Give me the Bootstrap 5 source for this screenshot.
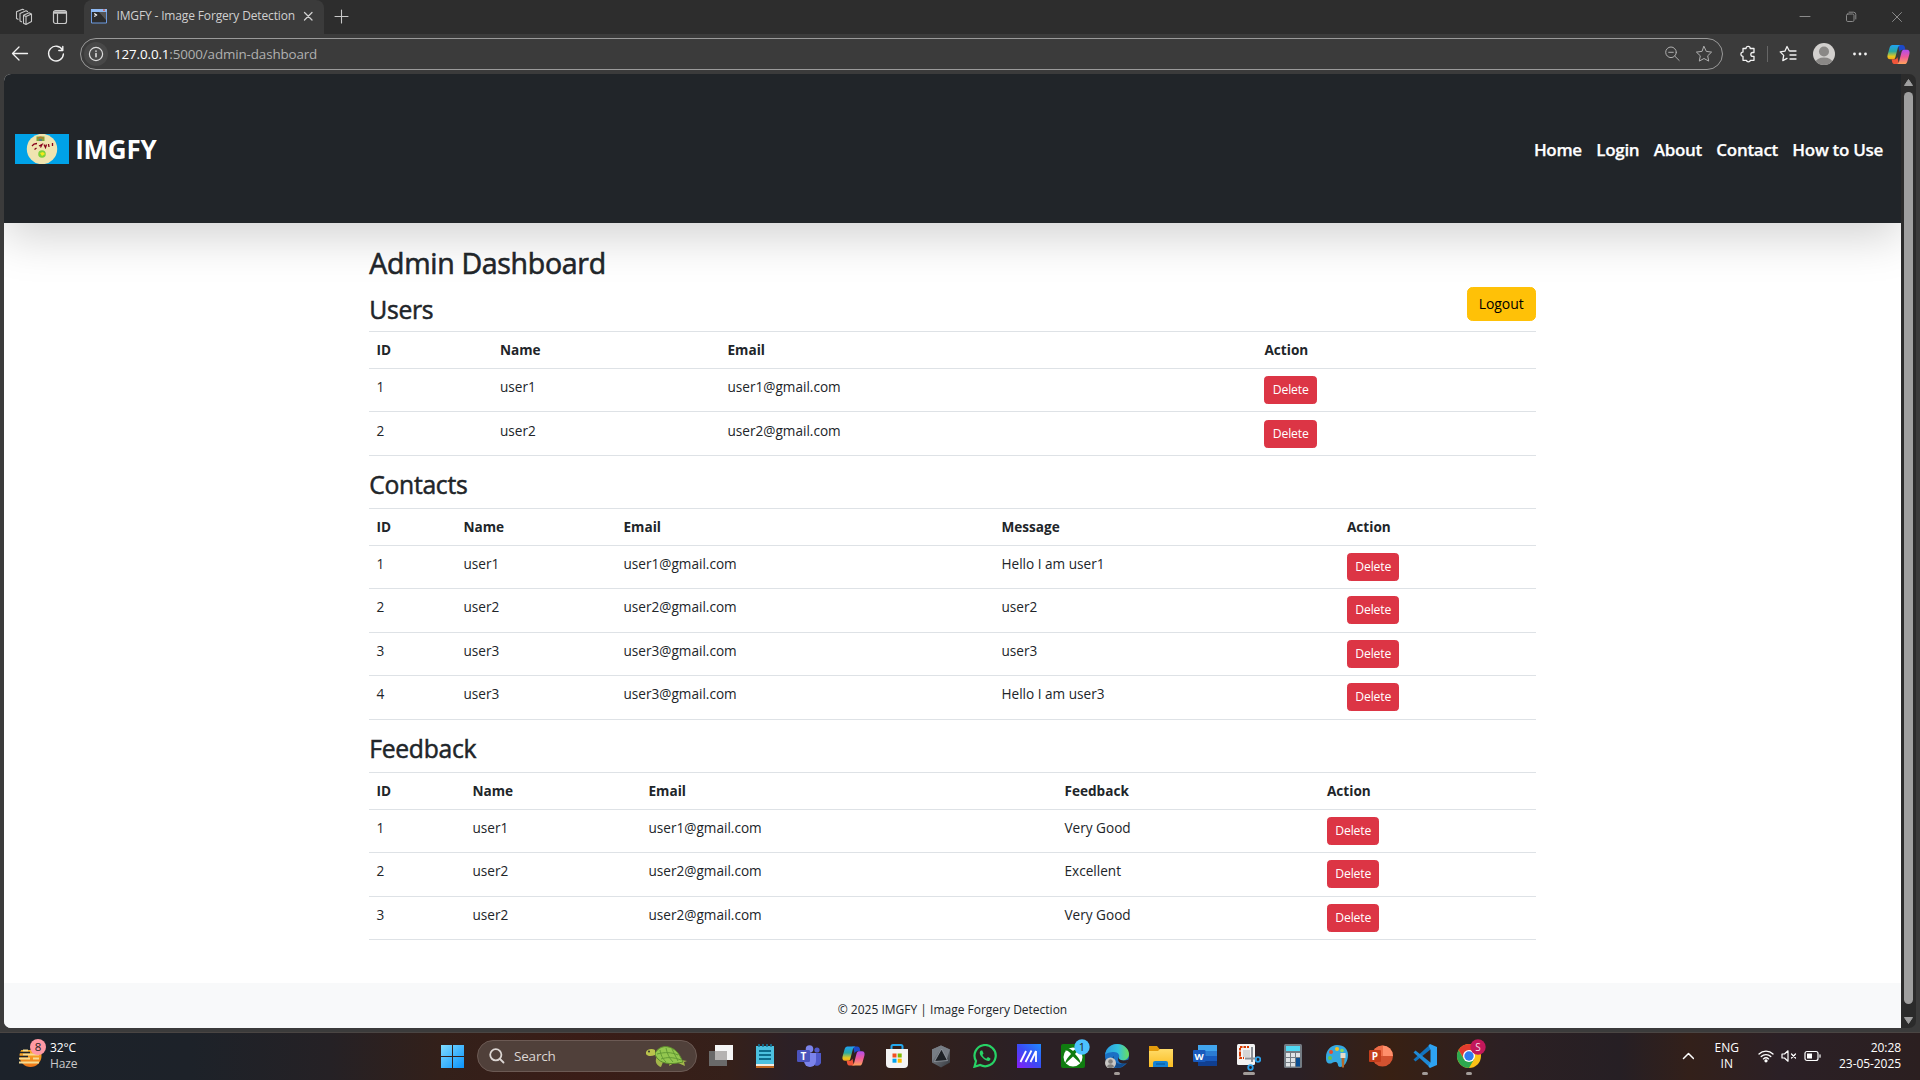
<!DOCTYPE html>
<html lang="en">
<head>
<meta charset="utf-8">
<meta name="viewport" content="width=device-width, initial-scale=1">
<title>IMGFY - Image Forgery Detection</title>
<link href="https://cdn.jsdelivr.net/npm/bootstrap@5.3.0/dist/css/bootstrap.min.css" rel="stylesheet">
<style>
html{font-size:14.4px}
body{font-family:"Open Sans","Noto Sans",sans-serif;width:1920px;height:1080px;overflow:hidden;background:#3b3b3b}
svg{display:block;flex:none}
.ln{fill:none;stroke:currentColor;stroke-linecap:round;stroke-linejoin:round}
/* browser chrome */
.tabstrip{height:34px;background:#2d2d2d;color:#c8c8c8}
.tabstrip .side{width:84px;padding-left:15px;gap:19px;border-bottom-right-radius:8px}
.tabitem{width:240px;height:34px;background:#3b3b3b;border-radius:8px 8px 0 0;padding:0 10px 2px 7px;font-size:12px;letter-spacing:-.15px;color:#d0d0d0}
.tabtitle{margin-left:9.5px}
.newtab{margin-left:9px}
.wincontrols{gap:30px;padding-right:15px;color:#8a8a8a}
.toolbar{height:40px;background:#3b3b3b;color:#f2f2f2}
.addr{width:1643px;height:32px;border:1px solid #9a9a9a;border-radius:16px;padding:0 9px 0 3px;color:#b0b0b0;font-size:13.4px}
.addr .info{width:24px;height:24px;border-radius:50%;background:#484848;color:#dcdcdc}
.addr b{color:#fff;font-weight:400}
.url{margin-left:6px;letter-spacing:-.13px}
.tools{gap:12px;padding-left:16px}
.tools svg:nth-child(1){margin-right:-2px}
.tools svg:nth-child(3){margin-right:4px;margin-left:-1px}
.tools svg:nth-child(4){margin-right:5px}
.tools svg:nth-child(5){margin-right:7px}
.view{height:954px;margin:0 4px;border-radius:7px;overflow:hidden;background:#2b2b2b}
.site{width:1897px;background:#fff;overflow:hidden}
.topnav{height:149px;background:#212529;box-shadow:0 14.4px 43.2px rgba(0,0,0,.175);padding:0 18px 0 11px}
.brandname{font-size:26px;font-weight:700;color:#fff;line-height:30px;letter-spacing:-.25px;margin-left:-1px}
.links{gap:14.4px;font-size:17px;font-weight:600;letter-spacing:-.3px;padding-top:2px}
.links a{color:#fff;text-decoration:none;-webkit-text-stroke:.25px}
.main{max-width:1188px;height:760px;padding-top:23px;padding-left:10.8px;padding-right:10.8px}
.main h2{font-size:28.5px;line-height:35px;margin-bottom:6px;font-weight:500;letter-spacing:-.3px;-webkit-text-stroke:.6px}
.main h3{font-size:24.7px;line-height:30.24px;font-weight:500;letter-spacing:-.3px;margin-bottom:7.2px;-webkit-text-stroke:.5px}
.userhead{height:44px}
.userhead h3{padding-top:1px}
.btn-logout{width:69px;height:34px;padding:0 0 1px;font-size:14px;letter-spacing:-.1px}
.main .table{table-layout:fixed;font-size:13.6px;line-height:21.6px;--bs-table-bg:transparent;border-top:1px solid #dee2e6;margin-bottom:14.4px}
.table>:not(caption)>*>*{padding:7.2px}
.table td{height:43.5px}
.table .btn{width:52.5px;height:28px;padding:0;font-size:12.2px;line-height:26px;border-radius:3.6px;letter-spacing:-.15px;display:block}
.t-users th:nth-child(1){width:123.5px}.t-users th:nth-child(2){width:227.5px}.t-users th:nth-child(3){width:537px}
.t-contacts th:nth-child(1){width:87px}.t-contacts th:nth-child(2){width:160px}.t-contacts th:nth-child(3){width:378px}.t-contacts th:nth-child(4){width:345.5px}
.t-feedback th:nth-child(1){width:96px}.t-feedback th:nth-child(2){width:176px}.t-feedback th:nth-child(3){width:416px}.t-feedback th:nth-child(4){width:262.5px}
.foot{height:45px;background:#f8f9fa;font-size:12px;padding-top:9px}
.scroll{width:15px;padding:5px 0 4px}
.thumb{width:9px;height:912px;border-radius:5px;background:#9f9f9f;margin:6px 0 13px}
/* taskbar */
.taskbar{height:48px;margin-top:4px;border-top:1px solid #4a4543;padding-bottom:2px;color:#fff;font-size:12px;line-height:16px;background:linear-gradient(90deg,#1c222a 0,#1d2229 190px,#252125 330px,#33201a 440px,#3a1d17 580px,#35201a 730px,#2c2026 790px,#33201a 900px,#2b2025 1020px,#2b2025 1300px,#382013 1390px,#2c2023 1500px,#261f24 1620px,#33201a 1690px,#2b2026 1780px,#2b1f20 1920px)}
.weather{width:437px;padding-left:18px;gap:4px;letter-spacing:-.15px}
.weather svg{margin-top:-6px}
.haze{color:#c9c9c9}
.pill{width:220px;height:32px;border-radius:16px;margin-left:9px;background:#50403a;border:1px solid #6c5a54;padding:0 7px 0 11px;font-size:13.5px;color:#dcd6d3;letter-spacing:-.2px}
.pill span{margin-left:9px}
.apps{margin-left:2px}
.app{width:44px;height:47px;padding-top:12px}
.dot{width:6px;height:3px;border-radius:2px;background:#a39c99;margin-top:4px}
.dot.wide{width:12px}
.tray{padding-right:19px;letter-spacing:-.07px}
.lang{width:64px;padding-left:2px}
</style>
<script src="https://cdn.jsdelivr.net/npm/bootstrap@5.3.0/dist/js/bootstrap.bundle.min.js"></script>
</head>
<body>
<svg width="0" height="0" class="position-absolute">
  <defs>
    <linearGradient id="cpA" x1="0" y1="0" x2="0" y2="1"><stop offset="0" stop-color="#1fa2f5"/><stop offset=".45" stop-color="#2aa9a0"/><stop offset=".8" stop-color="#e8c81e"/><stop offset="1" stop-color="#f4a51c"/></linearGradient>
    <linearGradient id="cpB" x1="0" y1="0" x2="0" y2="1"><stop offset="0" stop-color="#b04df0"/><stop offset=".5" stop-color="#ee5a9a"/><stop offset="1" stop-color="#ffa45a"/></linearGradient>
    <linearGradient id="win" x1="0" y1="0" x2="1" y2="1"><stop offset="0" stop-color="#7fdcff"/><stop offset="1" stop-color="#0a93fb"/></linearGradient>
    <linearGradient id="sun" x1="0" y1="0" x2="0" y2="1"><stop offset="0" stop-color="#fbc02d"/><stop offset="1" stop-color="#ee7518"/></linearGradient>
    <linearGradient id="edg" x1="0" y1="0" x2="1" y2="0"><stop offset="0" stop-color="#2b9be0"/><stop offset=".55" stop-color="#33c2dd"/><stop offset="1" stop-color="#6bdd5b"/></linearGradient>
    <linearGradient id="myas" x1="0" y1="1" x2="1" y2="0"><stop offset="0" stop-color="#8a1cf5"/><stop offset=".5" stop-color="#3a4bf5"/><stop offset="1" stop-color="#1f8bff"/></linearGradient>
    <linearGradient id="fold" x1="0" y1="0" x2="0" y2="1"><stop offset="0" stop-color="#ffdc6a"/><stop offset="1" stop-color="#fbbd22"/></linearGradient>
    <linearGradient id="grey" x1="0" y1="0" x2="1" y2="1"><stop offset="0" stop-color="#8b9097"/><stop offset="1" stop-color="#34383e"/></linearGradient>
    <symbol id="copilot" viewBox="0 0 24 24">
      <path d="M16 2c1.400 0 2.200.8 2.600 2.200L19.200 7h-3c-1.700 0-2.400.8-3 2.500L12 4.200C11.600 2.700 11 2 10 2z" fill="#1c49c8"/>
      <path d="M5.600 2H14c-1.400.4-2.200 1.300-2.700 3L8.800 14.500C8.300 16.400 7.400 17 5.600 17H3.200C.8 17 0 15.200.6 12.600L2.700 5C3.300 3 4.200 2 5.600 2z" fill="url(#cpA)"/>
      <path d="M8 22c-1.400 0-2.200-.8-2.600-2.200L4.800 17h3c1.700 0 2.400-.8 3-2.500l1.200 5.300c.4 1.500 1 2.200 2 2.200z" fill="#f0553a"/>
      <path d="M18.400 22H10c1.400-.4 2.200-1.300 2.700-3l2.500-9.500C15.700 7.600 16.600 7 18.400 7h2.400c2.400 0 3.200 1.800 2.600 4.400L21.300 19c-.6 2-1.500 3-2.900 3z" fill="url(#cpB)"/>
    </symbol>
  </defs>
</svg>

<div class="tabstrip d-flex align-items-center">
  <div class="side d-flex align-items-center">
    <svg width="18" height="18" viewBox="0 0 18 18" class="ln" stroke-width="1.100"><path d="M8.500 7.300l5.500-2.600 2.500 1.300v7.500L11 16.500l-2.500-1.300zM6.500 13.800L5 13V5.500l6-2.700 1.500.8M3 11.300L1.500 10.500V3.800L7.500 1.200l1.300.6M8.500 7.300L11 8.600l5.500-2.600M11 8.600v7.900"/></svg>
    <svg width="16" height="16" viewBox="0 0 16 16" class="ln" stroke-width="1.200"><rect x="1.500" y="1.500" width="13" height="13" rx="2"/><path d="M2.500 3.500h11" stroke-width="2.600"/><path d="M5.500 5v9"/></svg>
  </div>
  <div class="tabitem d-flex align-items-center">
    <svg width="16" height="16" viewBox="0 0 16 16"><path d="M.5 1.500h15v13.500H.5z" fill="#2c2c2c" stroke="#6d9be0"/><path d="M8 4h7v8z" fill="#555"/><path d="M0 1h16v3H0z" fill="#8fb9f2"/><path d="M12 1.500h2v1.300h-2z" fill="#d94a3a"/><path d="M3.300 5.500L5.500 7 3.300 8.500" fill="none" stroke="#fff" stroke-width="1.200"/></svg>
    <span class="tabtitle text-nowrap flex-grow-1">IMGFY - Image Forgery Detection</span>
    <svg width="12" height="12" viewBox="0 0 12 12" class="ln" stroke-width="1.300"><path d="M2.500 2.500l7.500 7.500M10 2.500L2.500 10"/></svg>
  </div>
  <svg width="16" height="16" viewBox="0 0 16 16" class="ln newtab" stroke-width="1.100"><path d="M8.500 1v13M2 7.500h13"/></svg>
  <div class="wincontrols d-flex align-items-center ms-auto">
    <svg width="16" height="16" viewBox="0 0 16 16" class="ln"><path d="M3 7.500h10"/></svg>
    <svg width="16" height="16" viewBox="0 0 16 16" class="ln"><rect x="3.500" y="5" width="7.500" height="7.500" rx="1.300"/><path d="M6 3.200h4.500a2.300 2.300 0 0 1 2.300 2.300V10"/></svg>
    <svg width="16" height="16" viewBox="0 0 16 16" class="ln"><path d="M3.500 3.500l9 9M12.500 3.500l-9 9"/></svg>
  </div>
</div>

<div class="toolbar d-flex align-items-center">
  <svg width="40" height="20" viewBox="0 0 40 20" class="ln" stroke-width="1.300"><path d="M27.500 9.500h-15M19 3L12.500 9.500l6.500 6.500"/></svg>
  <svg width="40" height="20" viewBox="0 0 40 20" class="ln" stroke-width="1.400"><path d="M22.500 6A7.400 7.400 0 1 0 23.400 10M22.800 2.500v4h-4"/></svg>
  <div class="addr d-flex align-items-center">
    <span class="info d-flex align-items-center justify-content-center"><svg width="16" height="16" viewBox="0 0 16 16" class="ln" stroke-width="1.200"><circle cx="8" cy="8" r="6.600"/><path d="M8 7.500v3.300M8 5v.2" stroke-width="1.600"/></svg></span>
    <span class="url"><b>127.0.0.1</b>:5000/admin-dashboard</span>
    <svg width="16" height="16" viewBox="0 0 16 16" class="ln ms-auto me-3" stroke="#8d8d8d"><circle cx="6" cy="6.300" r="5.300"/><path d="M9.900 10.200l4.300 4.300M3.700 6.300h4.600"/></svg>
    <svg width="18" height="18" viewBox="0 0 18 18" class="ln" stroke="#999"><path d="M9 1.500l2.300 4.900 5.300.7-3.900 3.700 1 5.300L9 13.500l-4.700 2.600 1-5.300L1.400 7.100l5.300-.7z"/></svg>
  </div>
  <div class="tools d-flex align-items-center">
    <svg width="18" height="18" viewBox="0 0 18 18" class="ln" stroke-width="1.300"><path d="M4 3.500h3a2.100 2.100 0 0 1 4.200 0H15v4h-1.300a1.900 1.900 0 0 0 0 3.800H15v4h-3.500a2.200 2.200 0 0 1-4.200 0H4v-4a2.100 2.100 0 0 1 0-4.200z"/></svg>
    <svg width="1" height="16"><path d="M0 0h1v16H0z" fill="#666"/></svg>
    <svg width="18" height="18" viewBox="0 0 18 18" class="ln" stroke-width="1.300"><path d="M10.200 5.800L8 1.500 5.900 6.200l-4.700.7 3.500 3.500-.9 5.200L8 13.400M11 6h6M11 10h6M11 14h6"/></svg>
    <svg width="22" height="22" viewBox="0 0 22 22"><clipPath id="av"><circle cx="11" cy="11" r="11"/></clipPath><g clip-path="url(#av)"><path d="M0 0h22v22H0z" fill="#d2d0ce"/><circle cx="11" cy="8.500" r="5" fill="#8a8886"/><ellipse cx="11" cy="19.500" rx="8.500" ry="5" fill="#8a8886"/></g></svg>
    <svg width="16" height="16" viewBox="0 0 16 16" fill="#f2f2f2"><circle cx="2.500" cy="8" r="1.400"/><circle cx="8" cy="8" r="1.400"/><circle cx="13.500" cy="8" r="1.400"/></svg>
    <svg width="23" height="23"><use href="#copilot"/></svg>
  </div>
</div>

<div class="view d-flex">
  <div class="site d-flex flex-column">
    <nav class="topnav d-flex align-items-center justify-content-between flex-shrink-0">
      <div class="d-flex align-items-center gap-2">
        <svg width="54" height="30" viewBox="0 0 54 30"><path d="M0 0h54v30H0z" fill="#00a2e8"/><circle cx="27" cy="15" r="15.200" fill="#efe4b0"/><path d="M21.500 2.500h8v4.500h-8z" fill="#7aa83a"/><path d="M22.500 5c2-2.500 4-2.500 6 0" stroke="#e8502a" fill="none"/><path d="M24 6h3" stroke="#3f48cc"/><path d="M17 12l2-2 3-.5M19.500 15.500l2-1.500M24 12l3-1.500-1.500 3M29 10.500l1.500 3 1-3M33.500 10l.5 3M37.500 9v3" fill="none" stroke="#88001b" stroke-width="1.300"/><circle cx="27" cy="20" r="3.800" fill="#7ed13c"/><path d="M25 19l3-1 2 2-3 2z" fill="#f6ea1c"/></svg>
        <span class="brandname">IMGFY</span>
      </div>
      <div class="links d-flex">
        <a href="#">Home</a><a href="#">Login</a><a href="#">About</a><a href="#">Contact</a><a href="#">How to Use</a>
      </div>
    </nav>
    <main class="container main">
      <h2>Admin Dashboard</h2>
      <div class="userhead d-flex justify-content-between align-items-start">
        <h3 class="mt-2">Users</h3>
        <button class="btn btn-warning btn-logout">Logout</button>
      </div>
      <table class="table t-users">
        <thead><tr><th>ID</th><th>Name</th><th>Email</th><th>Action</th></tr></thead>
        <tbody>
          <tr><td>1</td><td>user1</td><td>user1@gmail.com</td><td><button class="btn btn-danger">Delete</button></td></tr>
          <tr><td>2</td><td>user2</td><td>user2@gmail.com</td><td><button class="btn btn-danger">Delete</button></td></tr>
        </tbody>
      </table>
      <h3>Contacts</h3>
      <table class="table t-contacts">
        <thead><tr><th>ID</th><th>Name</th><th>Email</th><th>Message</th><th>Action</th></tr></thead>
        <tbody>
          <tr><td>1</td><td>user1</td><td>user1@gmail.com</td><td>Hello I am user1</td><td><button class="btn btn-danger">Delete</button></td></tr>
          <tr><td>2</td><td>user2</td><td>user2@gmail.com</td><td>user2</td><td><button class="btn btn-danger">Delete</button></td></tr>
          <tr><td>3</td><td>user3</td><td>user3@gmail.com</td><td>user3</td><td><button class="btn btn-danger">Delete</button></td></tr>
          <tr><td>4</td><td>user3</td><td>user3@gmail.com</td><td>Hello I am user3</td><td><button class="btn btn-danger">Delete</button></td></tr>
        </tbody>
      </table>
      <h3>Feedback</h3>
      <table class="table t-feedback">
        <thead><tr><th>ID</th><th>Name</th><th>Email</th><th>Feedback</th><th>Action</th></tr></thead>
        <tbody>
          <tr><td>1</td><td>user1</td><td>user1@gmail.com</td><td>Very Good</td><td><button class="btn btn-danger">Delete</button></td></tr>
          <tr><td>2</td><td>user2</td><td>user2@gmail.com</td><td>Excellent</td><td><button class="btn btn-danger">Delete</button></td></tr>
          <tr><td>3</td><td>user2</td><td>user2@gmail.com</td><td>Very Good</td><td><button class="btn btn-danger">Delete</button></td></tr>
        </tbody>
      </table>
    </main>
    <footer class="foot d-flex justify-content-center align-items-center flex-shrink-0"><span>© 2025 IMGFY | Image Forgery Detection</span></footer>
  </div>
  <div class="scroll d-flex flex-column align-items-center">
    <svg width="9" height="7" viewBox="0 0 9 7"><path d="M4.500.5L8.500 6.500H.5z" fill="#9f9f9f" stroke="#9f9f9f" stroke-linejoin="round"/></svg>
    <div class="thumb"></div>
    <svg width="9" height="7" viewBox="0 0 9 7"><path d="M4.500 6.500L8.500.5H.5z" fill="#9f9f9f" stroke="#9f9f9f" stroke-linejoin="round"/></svg>
  </div>
</div>

<div class="taskbar d-flex align-items-center">
  <div class="weather d-flex align-items-center">
    <svg width="28" height="30" viewBox="0 0 28 30"><circle cx="12.500" cy="18" r="11" fill="url(#sun)"/><path d="M0 5h24v7H0z" fill="#1d2229"/><path d="M5 12.500h5M5 16.500h16M1 20.500h11M15 20.500h6M1 24.500h20" stroke="#f6dc93" stroke-width="2"/><path d="M1 14.500h11M1 18.500h9" stroke="#1d2229" stroke-width="1.600"/><circle cx="20" cy="9" r="8" fill="#ff99a4"/><text x="20" y="13" font-size="11.500" text-anchor="middle" fill="#222">8</text></svg>
    <div><div>32°C</div><div class="haze">Haze</div></div>
  </div>
  <svg width="31" height="24" viewBox="0 0 31 24"><path d="M4 1h11v11H4zM16 1h11v11H16zM4 13h11v11H4zM16 13h11v11H16z" fill="url(#win)"/></svg>
  <div class="pill d-flex align-items-center">
    <svg width="16" height="16" viewBox="0 0 16 16" class="ln" stroke-width="1.800"><circle cx="6.800" cy="6.800" r="5.600"/><path d="M11 11l3.500 3.500"/></svg>
    <span>Search</span>
    <svg width="44" height="24" viewBox="0 0 44 24" class="ms-auto"><path d="M12 13C9 17 12 22 16 23l2-5zM36 16l6 1-3 1 1 4-7-3zM29 19l-5 3 1-4z" fill="#a3b64a"/><path d="M10 9c5-8 13-8 20-3 4 3 6 8 8 12-8 2-20 3-25-3-2-2-3-4-3-6z" fill="#93c74f" stroke="#5d8a2c"/><path d="M15 6c1 5 2 8 6 12M21 4c1 5 3 10 7 14M27 5c2 4 4 8 6 12M12 10c8-2 14-2 21 1M16 15c6-2 12-2 20 1" fill="none" stroke="#639a35"/><path d="M1 8c1-3 6-4 9-2v5c-3 1-7 2-9-1z" fill="#b9c24c"/><circle cx="4" cy="7.500" r="1" fill="#333"/></svg>
  </div>
  <div class="apps d-flex">
    <div class="app d-flex flex-column align-items-center"><svg width="24" height="24" viewBox="0 0 24 24"><path d="M6 1h18v15H6z" fill="#f5f5f5"/><path d="M0 7h18v15H0z" fill="#6a6a6a"/><path d="M6 7h12v9H6z" fill="#b5b3b2"/></svg></div>
    <div class="app d-flex flex-column align-items-center"><svg width="24" height="24" viewBox="0 0 24 24"><path d="M3 2h18v18H3z" fill="#4cc1e0"/><path d="M3 20h18v2H3z" fill="#f4ede2"/><path d="M3 22h18v2H3z" fill="#c0671f"/><path d="M6 0v3M10 0v3M14 0v3M18 0v3" stroke="#14789b" stroke-width="1.600"/><path d="M6 7h12M6 11h12M6 15h12" stroke="#0d6c8d" stroke-width="1.800"/></svg></div>
    <div class="app d-flex flex-column align-items-center"><svg width="24" height="24" viewBox="0 0 24 24"><circle cx="20" cy="6" r="2.600" fill="#5059c9"/><path d="M16 9h8v7a4 4 0 0 1-8 3z" fill="#5059c9"/><circle cx="12.500" cy="5" r="3.800" fill="#7b83eb"/><path d="M7 9h12v8a6 6 0 0 1-12 0z" fill="#7b83eb"/><rect y="6" width="13" height="12" rx="1.200" fill="#4b53bc"/><text x="6.500" y="15.500" font-size="10" font-weight="700" fill="#fff" text-anchor="middle">T</text></svg></div>
    <div class="app d-flex flex-column align-items-center"><svg width="23" height="24"><use href="#copilot"/></svg></div>
    <div class="app d-flex flex-column align-items-center"><svg width="24" height="24" viewBox="0 0 24 24"><path d="M6.500 6V2.500a1.500 1.500 0 0 1 1.500-1.500h8a1.500 1.500 0 0 1 1.500 1.500V6" fill="none" stroke="#23a8ee" stroke-width="2"/><path d="M1 5h22v15a4 4 0 0 1-4 4H5a4 4 0 0 1-4-4z" fill="#f4f4f4"/><path d="M7.500 9.500h4v4h-4z" fill="#f25022"/><path d="M12.700 9.500h4v4h-4z" fill="#7fba00"/><path d="M7.500 14.700h4v4h-4z" fill="#00a4ef"/><path d="M12.700 14.700h4v4h-4z" fill="#ffb900"/></svg></div>
    <div class="app d-flex flex-column align-items-center"><svg width="24" height="24" viewBox="0 0 24 24"><path d="M12 1.500l9 4v13l-9 5-9-5v-13z" fill="url(#grey)"/><path d="M12 1.500l9 4-4 12-5-13-9 13v-12z" fill="#777d85"/><path d="M12.500 5l6 11.500-13 1z" fill="#1d2126" stroke="#a2a8b0" stroke-width=".7"/></svg></div>
    <div class="app d-flex flex-column align-items-center"><svg width="24" height="24" viewBox="0 0 24 24"><path d="M1.500 22.700L3 17A10.600 10.600 0 1 1 7.200 21z" fill="none" stroke="#27d366" stroke-width="2.200"/><path d="M8 6.500c-2 1.200-1.500 4 .8 6.600s5.500 4.600 7.500 3.600c1.400-.7 1.300-2.200.9-2.500l-2.300-1.100-1.600 1.600c-1.800-.7-3.200-2.200-3.900-3.700L10.500 9.500 9.300 6.600z" fill="#27d366"/></svg></div>
    <div class="app d-flex flex-column align-items-center"><svg width="24" height="24" viewBox="0 0 24 24"><path d="M0 0h24v24H0z" fill="url(#myas)"/><path d="M3.500 18L9 7M8.500 18L14.500 6.500M19 7v11M13.500 18L19 7" fill="none" stroke="#fff" stroke-width="1.800"/></svg></div>
    <div class="app d-flex flex-column align-items-center"><svg width="36" height="30" viewBox="-6 -6 36 30" style="margin-top:-6px"><rect width="24" height="24" rx="2" fill="#107c10"/><circle cx="12" cy="13" r="9.500" fill="#fff"/><path d="M5 4C8 3.500 11 6 12 7c1-1 4-3.500 7-3v2.500c-2 0-4 2-5 3.500 3 3 6 7 5.500 9.500L12 12.500 4.500 19.500C4 17 7 13 10 10 9 8.500 7 6.500 5 6.500z" fill="#107c10"/><circle cx="21" cy="3" r="7.700" fill="#4cc2ff"/><text x="21" y="7" font-size="11" text-anchor="middle" fill="#222">1</text></svg></div>
    <div class="app d-flex flex-column align-items-center"><svg width="24" height="24" viewBox="0 0 24 24"><circle cx="12" cy="12" r="12" fill="#1b70c4"/><path d="M0 11C1 4 6 0 12 0c7 0 12 5 12 10 0 4-3 6.500-6.500 6.500-3 0-4.500-1.500-3.500-3C15 11 13 8 9 8 5 8 1 9 0 11z" fill="url(#edg)"/><path d="M9 12c-1 6 5 10 12 7-2 3-6 5-9 5-6-2-7-9-3-12z" fill="#114a8b"/><path d="M14 12c-1.500 3 2 6 10 3.500L22 19c-6 2-11-1-8-7z" fill="#2d2025"/><circle cx="5.500" cy="19" r="5.500" fill="#c9c7c5"/><circle cx="5.500" cy="17.500" r="2.300" fill="#807e7c"/><path d="M2 22.500c1-3 6-3 7 0-2 2-5 2-7 0z" fill="#807e7c"/></svg><span class="dot"></span></div>
    <div class="app d-flex flex-column align-items-center"><svg width="24" height="24" viewBox="0 0 24 24"><path d="M0 2h8l2.500 3H24v5H0z" fill="#e39b0c"/><path d="M0 7h9l2-2h13v18H0z" fill="url(#fold)"/><path d="M4 23v-4a2 2 0 0 1 2-2h11a2 2 0 0 1 2 2v4z" fill="#1482d4"/><path d="M7 20h9" stroke="#0c5fa5" stroke-width="1.300"/></svg></div>
    <div class="app d-flex flex-column align-items-center"><svg width="24" height="24" viewBox="0 0 24 24"><path d="M5 1h19v6H5z" fill="#41a5ee"/><path d="M5 7h19v5H5z" fill="#2b7cd3"/><path d="M5 12h19v5H5z" fill="#185abd"/><path d="M5 17h19v5H5z" fill="#103f91"/><rect y="6" width="12.500" height="12" rx="1" fill="#185abd"/><text x="6.200" y="15.500" font-size="9.500" font-weight="700" fill="#fff" text-anchor="middle">W</text></svg></div>
    <div class="app d-flex flex-column align-items-center"><svg width="24" height="27" viewBox="0 0 24 27" style="margin-bottom:-3px"><rect width="18" height="21" rx="1.500" fill="#f3f3f3"/><path d="M3 10V3h9" fill="none" stroke="#d83b01" stroke-width="2" stroke-dasharray="2.500 1"/><path d="M3 10v4h4" fill="none" stroke="#d83b01" stroke-width="2" stroke-dasharray="2.500 1"/><path d="M6 6h7v7H6z" fill="#d5d5d5"/><path d="M15 3v15M8 14.500h12" stroke="#8a8f96" stroke-width="2"/><circle cx="21" cy="15.500" r="2.300" fill="none" stroke="#2aa0ea" stroke-width="1.800"/><circle cx="13.500" cy="23.500" r="2.300" fill="none" stroke="#2aa0ea" stroke-width="1.800"/></svg><span class="dot wide"></span></div>
    <div class="app d-flex flex-column align-items-center"><svg width="24" height="24" viewBox="0 0 24 24"><rect x="3" width="18" height="24" rx="1.500" fill="#737b83"/><path d="M5 2h14v5H5z" fill="#50d9f5"/><path d="M5 9h4v4H5zM10 9h4v4h-4zM15 9h4v4h-4zM5 14h4v4H5zM10 14h4v4h-4zM5 19h4v3.500H5zM10 19h4v3.500h-4z" fill="#dfe3e6"/><path d="M15 14h4v8.500h-4z" fill="#0b4f93"/></svg></div>
    <div class="app d-flex flex-column align-items-center"><svg width="24" height="24" viewBox="0 0 24 24"><path d="M12 1c7 0 11 4 11 10 0 7-4 12-8 12-3 0-1-4-4-5-3-.6-4 2-7 1.500C1.500 19 1 17 1 13 1 6 6 1 12 1z" fill="#35a9e1"/><circle cx="6" cy="8" r="2" fill="#e74c2e"/><circle cx="12" cy="5" r="2" fill="#f8c021"/><circle cx="5" cy="14" r="2" fill="#6cc24a"/><circle cx="17" cy="6.500" r="1.800" fill="#8cd95a"/><path d="M15.500 9h5v5h-5z" fill="#e8dccb"/><path d="M16.500 14h3l-.5 9.500h-2z" fill="#b66a2c"/></svg></div>
    <div class="app d-flex flex-column align-items-center"><svg width="24" height="24" viewBox="0 0 24 24"><circle cx="13.500" cy="12" r="10.500" fill="#d35230"/><path d="M13.500 1.500A10.500 10.500 0 0 1 24 12H13.500z" fill="#ff8f6b"/><path d="M3 12a10.500 10.500 0 0 1 10.500-10.500V12z" fill="#ed6c47"/><rect y="6" width="12" height="12" rx="1" fill="#c43e1c"/><text x="6" y="15.500" font-size="10" font-weight="700" fill="#fff" text-anchor="middle">P</text></svg></div>
    <div class="app d-flex flex-column align-items-center"><svg width="24" height="24" viewBox="0 0 24 24"><path d="M17.500 5.500L2.500 17.500l-2-2L17 .5z" fill="#1273bd"/><path d="M17.500 18.500L2.500 6.500l-2 2L17 23.500z" fill="#1f8ad6"/><path d="M17 0l7 3v18l-7 3-1.500-1.500L17.500 18V6l-2-4.500z" fill="#2ea3f2"/></svg><span class="dot"></span></div>
    <div class="app d-flex flex-column align-items-center"><svg width="36" height="30" viewBox="-6 -6 36 30" style="margin-top:-6px"><circle cx="12" cy="12" r="12" fill="#fbc116"/><path d="M1.600 6A12 12 0 0 1 22.400 6H12L7 15z" fill="#e33b2e"/><path d="M1.600 6A12 12 0 0 0 12 24l5.200-9H6.800z" fill="#2da94f"/><circle cx="12" cy="12" r="6" fill="#fff"/><circle cx="12" cy="12" r="4.700" fill="#2f7cf0"/><circle cx="21" cy="3" r="7.700" fill="#c2185b"/><text x="21" y="6.800" font-size="10" text-anchor="middle" fill="#f6dbe6">S</text></svg><span class="dot"></span></div>
  </div>
  <div class="tray d-flex align-items-center ms-auto">
    <svg width="12" height="12" viewBox="0 0 12 12" class="ln" stroke-width="1.500"><path d="M1.500 8.500l5-5 5 5"/></svg>
    <div class="lang text-center">ENG<br>IN</div>
    <svg width="16" height="14" viewBox="0 0 16 14" class="ln" stroke-width="1.300"><path d="M1 5a10 10 0 0 1 14 0M3.200 7.500a7 7 0 0 1 9.600 0M5.400 9.900a4 4 0 0 1 5.200 0"/><circle cx="8" cy="11.800" r="1" fill="#fff"/></svg>
    <svg width="16" height="14" viewBox="0 0 16 14" class="ln mx-2" stroke-width="1.200"><path d="M1 5h2.500L7 1.800v10.400L3.500 9H1zM10.500 5l4 4M14.500 5l-4 4"/></svg>
    <svg width="17" height="12" viewBox="0 0 17 12" class="ln me-3" stroke-width="1.200"><rect x="1" y="1.500" width="13" height="9" rx="2"/><path d="M16 4.800v2.400"/><path d="M3 3.500h5v5H3z" fill="#fff" stroke="none"/></svg>
    <div class="text-end ps-1">20:28<br>23-05-2025</div>
  </div>
</div>
</body>
</html>
